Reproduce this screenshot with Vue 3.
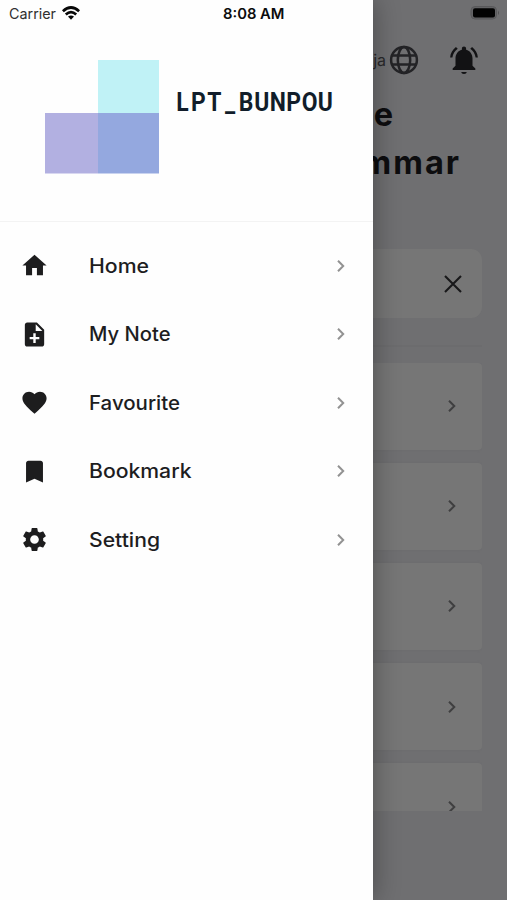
<script setup>
const items = [
  { label: 'Home', width: 60, path: 'M10 20v-6h4v6h5v-8h3L12 3 2 12h3v8z' },
  { label: 'My Note', width: 81.5, path: 'M14 2H6c-1.1 0-1.99.9-1.99 2L4 20c0 1.1.89 2 1.99 2H18c1.1 0 2-.9 2-2V8l-6-6zm2 14h-3v3h-2v-3H8v-2h3v-3h2v3h3v2zm-3-7V3.5L18.5 9H13z' },
  { label: 'Favourite', width: 91, path: 'M12 21.35l-1.45-1.32C5.4 15.36 2 12.28 2 8.5 2 5.42 4.42 3 7.5 3c1.74 0 3.41.81 4.5 2.09C13.09 3.81 14.76 3 16.5 3 19.58 3 22 5.42 22 8.5c0 3.78-3.4 6.86-8.55 11.54L12 21.35z' },
  { label: 'Bookmark', width: 102.5, path: 'M17 3H7c-1.1 0-1.99.9-1.99 2L5 21l7-3 7 3V5c0-1.1-.9-2-2-2z' },
  { label: 'Setting', width: 71, path: 'M19.14 12.94c.04-.3.06-.61.06-.94 0-.32-.02-.64-.07-.94l2.03-1.58c.18-.14.23-.41.12-.61l-1.92-3.32c-.12-.22-.37-.29-.59-.22l-2.39.96c-.5-.38-1.03-.7-1.62-.94l-.36-2.54c-.04-.24-.24-.41-.48-.41h-3.84c-.24 0-.43.17-.47.41l-.36 2.54c-.59.24-1.13.57-1.62.94l-2.39-.96c-.22-.08-.47 0-.59.22L2.74 8.87c-.12.21-.08.47.12.61l2.03 1.58c-.05.3-.09.63-.09.94s.02.64.07.94l-2.03 1.58c-.18.14-.23.41-.12.61l1.92 3.32c.12.22.37.29.59.22l2.39-.96c.5.38 1.03.7 1.62.94l.36 2.54c.05.24.24.41.48.41h3.84c.24 0 .44-.17.47-.41l.36-2.54c.59-.24 1.13-.56 1.62-.94l2.39.96c.22.08.47 0 .59-.22l1.92-3.32c.12-.22.07-.47-.12-.61l-2.01-1.58zM12 15.6c-1.98 0-3.6-1.62-3.6-3.6s1.62-3.6 3.6-3.6 3.6 1.62 3.6 3.6-1.62 3.6-3.6 3.6z' },
]

// Even pitch for the wordmark, in the narrowed coordinate space of its text.
const nameSqueeze = 0.88
const nameX = Array.from({ length: 10 }, (_, i) => ((182.5 + 15.88 * i) / nameSqueeze).toFixed(2)).join(' ')
</script>

<template>
  <div class="screen">
    <main class="page">
      <div class="battery-row">
        <svg width="30" height="16" viewBox="0 0 30 16">
          <rect x="1" y="1.5" width="25.5" height="12.5" rx="4" fill="#636365" stroke="#59595b" />
          <rect x="3" y="3.2" width="22" height="9.2" rx="2" fill="#020202" />
          <path d="M28 5.5q2 2.3 0 4.6z" fill="#515153" />
        </svg>
      </div>
      <div class="toolbar">
        <span class="lang">ja</span>
        <svg class="globe" width="30" height="30" viewBox="0 0 30 30" fill="none" stroke="#232326" stroke-width="2.5">
          <circle cx="15" cy="15" r="12.9" />
          <ellipse cx="15" cy="15" rx="6.2" ry="12.9" />
          <path d="M3 10.4h24M3 19.6h24" />
        </svg>
        <svg class="bell" width="34" height="34" viewBox="0 0 24 24" fill="#121214">
          <path d="M12 21.8c1.1 0 1.9-.6 1.9-1.4h-3.8c0 .8.8 1.4 1.9 1.4zM7.58 4.08 6.3 2.8C3.9 4.6 2.35 7.3 2.2 10.3h1.6c.3-2.5 1.8-4.8 3.78-6.22zM20.2 10.3h1.6c-.15-3-1.7-5.7-4.1-7.5l-1.28 1.28c2 1.42 3.48 3.72 3.78 6.22zM18 11c0-3.07-1.64-5.64-4.5-6.32V4c0-.83-.67-1.5-1.5-1.5s-1.5.67-1.5 1.5v.68C7.63 5.36 6 7.92 6 11v5l-2 2v1h16v-1l-2-2v-5z" />
        </svg>
      </div>
      <h1 class="title"><span class="line first">Japanese</span><span class="line">Grammar</span></h1>
      <div class="search">
        <svg width="20" height="20" viewBox="0 0 20 20" fill="none" stroke="#18181a" stroke-width="2.1">
          <path d="M2 2 18 18M18 2 2 18" />
        </svg>
      </div>
      <div class="rule"></div>
      <div class="cards">
        <div v-for="n in 5" :key="n" class="card">
          <svg width="10" height="14" viewBox="0 0 10 14" fill="none" stroke="#3f3f40" stroke-width="2">
            <path d="M2 1.7 7.3 7 2 12.3" />
          </svg>
        </div>
      </div>
    </main>

    <aside class="drawer">
      <div class="status">
        <svg width="300" height="27" viewBox="0 0 300 27">
          <text class="carrier" x="9" y="18.6" textLength="47" lengthAdjust="spacingAndGlyphs">Carrier</text>
          <g fill="none" stroke="#080808" stroke-width="2.7">
            <path d="M62.9 11.2Q71 3.8 79.1 11.2" />
            <path d="M65.8 14.5Q71 9.8 76.2 14.5" />
          </g>
          <path d="M68 16.6Q71 14.2 74 16.6L71 19.7z" fill="#080808" />
          <text class="clock" x="223" y="18.6" textLength="61.5" lengthAdjust="spacingAndGlyphs">8:08 AM</text>
        </svg>
      </div>
      <header class="brand">
        <svg width="372" height="150" viewBox="0 0 372 150">
          <rect x="98" y="33" width="61" height="53" fill="#c0f2f6" />
          <rect x="45" y="86" width="53" height="60.5" fill="#b2b0e1" />
          <rect x="98" y="86" width="61" height="60.5" fill="#94a8df" />
          <text class="name" :transform="`scale(${nameSqueeze} 1)`" :x="nameX" y="84.5">LPT_BUNPOU</text>
        </svg>
      </header>
      <nav class="menu">
        <a v-for="item in items" :key="item.label" class="item">
          <svg class="icon" width="29" height="29" viewBox="0 0 24 24"><path :d="item.path" /></svg>
          <svg class="label" width="120" height="30" viewBox="0 0 120 30">
            <text x="0" y="22" :textLength="item.width" lengthAdjust="spacingAndGlyphs">{{ item.label }}</text>
          </svg>
          <svg class="chevron" width="10" height="14" viewBox="0 0 10 14"><path d="M2 1.8 7.2 7 2 12.2" /></svg>
        </a>
      </nav>
    </aside>
  </div>
</template>

<style>
body { margin: 0; }
</style>

<style scoped>
.screen {
  position: relative;
  width: 507px;
  height: 900px;
  overflow: hidden;
  background: #6f6f71;
  font-family: Inter, "Liberation Sans", sans-serif;
}
svg { display: block; flex: none; }
.page {
  display: flex;
  flex-direction: column;
  height: 900px;
  box-sizing: border-box;
  padding: 5px 25px 0;
}
.battery-row {
  display: flex;
  justify-content: flex-end;
  height: 37px;
  margin-right: -18px;
}
.toolbar {
  display: flex;
  align-items: center;
  justify-content: flex-end;
  height: 35px;
  padding-right: 1px;
}
.lang { font-size: 16px; color: #29292b; margin-right: 3px; }
.bell { margin-left: 28px; }
.title {
  display: flex;
  flex-direction: column;
  margin: 13.5px 0 0;
  width: 436px;
  font-size: 32.5px;
  line-height: 48px;
  font-weight: 700;
  letter-spacing: 2px;
  color: #0d0d0f;
  text-align: right;
}
.first { padding-right: 66px; }
.search {
  display: flex;
  align-items: center;
  justify-content: flex-end;
  height: 69px;
  margin-top: 62.5px;
  padding-right: 19px;
  border-radius: 11px;
  background: #767676;
}
.rule { height: 2px; margin: 26.5px 0 16px; background: #6c6c6e; }
.cards {
  display: flex;
  flex-direction: column;
  gap: 13px;
  height: 448px;
  overflow: hidden;
}
.card {
  flex: none;
  display: flex;
  align-items: center;
  justify-content: flex-end;
  height: 87.2px;
  box-sizing: border-box;
  padding-right: 25px;
  border-radius: 4px;
  background: #767676;
  box-shadow: 0 0 3px #6b6b6d;
}
.drawer {
  position: absolute;
  top: 0;
  left: 0;
  width: 372.5px;
  height: 900px;
  background: #fefefe;
  box-shadow: 2px 0 24px rgba(0, 0, 0, 0.3);
}
.carrier { font-size: 14.5px; fill: #303030; }
.clock { font-size: 14px; font-weight: 600; fill: #0c0c0c; }
.brand { height: 194px; border-bottom: 1px solid #f3f3f3; }
.name { font-family: Roboto, sans-serif; font-weight: 700; font-size: 26px; fill: #111d2a; text-anchor: middle; }
.menu { display: flex; flex-direction: column; padding-top: 9.5px; }
.item {
  display: flex;
  align-items: center;
  height: 68.5px;
  padding: 0 27px 0 20px;
}
.icon { fill: #1d1d1e; }
.label { margin-left: 40px; font-size: 19.5px; font-weight: 500; fill: #1d1d1f; }
.chevron { margin-left: auto; fill: none; stroke: #929292; stroke-width: 2; }
</style>
